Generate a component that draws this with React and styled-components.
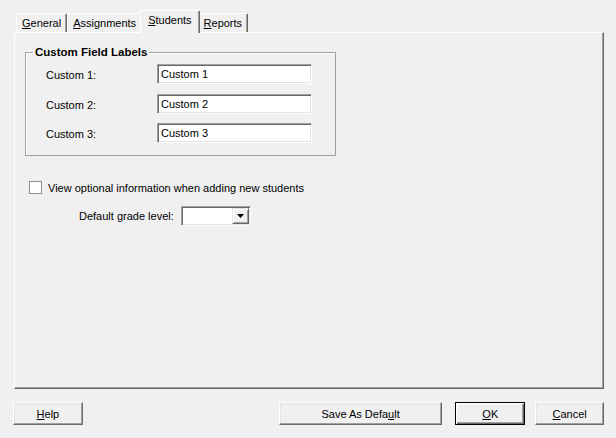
import React from "react";
import styled, { createGlobalStyle } from "styled-components";

const Global = createGlobalStyle`
  html, body { margin: 0; padding: 0; background: #f0f0f0; }
  body { font-family: "Liberation Sans", Arial, sans-serif; font-size: 11px; color: #000; }
  * { box-sizing: border-box; }
`;

const Window = styled.div`
  width: 616px;
  height: 438px;
  padding: 10px 12px 0 14px;
  background: #f0f0f0;
  display: flex;
  flex-direction: column;
`;

const TabRow = styled.div`
  display: flex;
  align-items: flex-end;
  height: 22px;
  padding-left: 2px;
  position: relative;
  z-index: 1;
`;

const Tab = styled.div`
  height: ${(p) => (p.$active ? "23px" : "19px")};
  margin: ${(p) => (p.$active ? "0 -2px -1px -2px" : "0")};
  padding: ${(p) => (p.$active ? "2px 7px 0 7px" : "2px 5px 0 5px")};
  background: #f0f0f0;
  border-left: 1px solid #fff;
  border-top: 1px solid #fff;
  border-right: 1px solid #696969;
  box-shadow: inset -1px 0 #a0a0a0;
  border-radius: 2px 2px 0 0;
  line-height: 14px;
  white-space: nowrap;
  z-index: ${(p) => (p.$active ? 2 : 1)};
`;

const U = styled.span`
  text-decoration: underline;
  text-underline-offset: 1px;
`;

const Panel = styled.div`
  height: 357px;
  border-top: 1px solid #fff;
  border-left: 1px solid #fff;
  border-right: 1px solid #696969;
  border-bottom: 1px solid #696969;
  box-shadow: inset -1px -1px #a0a0a0;
  padding: 13px 10px 0 10px;
  display: flex;
  flex-direction: column;
`;

const Group = styled.fieldset`
  margin: 0;
  width: 311px;
  border: 1px solid #a0a0a0;
  box-shadow: inset 1px 1px #fff;
  padding: 5px 0 12px 20px;
  display: grid;
  grid-template-columns: 111px 155px;
  grid-auto-rows: 20px;
  row-gap: 9.5px;
  align-items: center;
`;

const Legend = styled.legend`
  margin-left: -13px;
  padding: 0 2px;
  font-weight: bold;
  font-size: 11.5px;
  line-height: 13px;
`;

const Label = styled.span`
  line-height: 14px;
  padding-top: 2px;
`;

const Field = styled.div`
  height: 20px;
  background: #fff;
  border-style: solid;
  border-width: 1px;
  border-color: #a0a0a0 #fff #fff #a0a0a0;
  box-shadow: inset 1px 1px #696969, inset -1px -1px #e3e3e3;
  padding: 2px 0 0 3px;
  line-height: 14px;
  display: flex;
`;

const CheckRow = styled.label`
  display: flex;
  align-items: center;
  margin: 25px 0 0 4px;
  gap: 6px;
  height: 13px;
`;

const Box = styled.span`
  width: 13px;
  height: 13px;
  background: #fff;
  border: 1px solid #8f8f8f;
  flex: none;
`;

const GradeRow = styled.div`
  display: flex;
  align-items: center;
  margin: 12px 0 0 54px;
  gap: 7px;
`;

const Select = styled(Field)`
  padding: 0;
  justify-content: flex-end;
  width: 70px;
`;

const DropBtn = styled.span`
  width: 17px;
  height: 16px;
  margin: 1px 1px 0 0;
  background: #f0f0f0;
  border-style: solid;
  border-width: 1px;
  border-color: #e3e3e3 #696969 #696969 #e3e3e3;
  box-shadow: inset 1px 1px #fff, inset -1px -1px #a0a0a0;
  display: flex;
  align-items: center;
  justify-content: center;
`;

const ButtonBar = styled.div`
  display: flex;
  margin: 13px 0 0 -1px;
`;

const Button = styled.div`
  width: ${(p) => p.$w}px;
  height: 23px;
  margin-left: ${(p) => p.$ml || 0}px;
  display: flex;
  align-items: center;
  justify-content: center;
  background: #f0f0f0;
  border-style: solid;
  border-width: 1px;
  border-color: ${(p) => (p.$default ? "#000" : "#fff #696969 #696969 #fff")};
  box-shadow: ${(p) =>
    p.$default
      ? "inset 1px 1px #fff, inset -1px -1px #696969, inset -2px -2px #a0a0a0"
      : "inset -1px -1px #a0a0a0, inset 1px 1px #e3e3e3"};
  line-height: 14px;
  padding-top: 1px;
`;

export default function App() {
  return (
    <>
      <Global />
      <Window>
        <TabRow>
          <Tab><U>G</U>eneral</Tab>
          <Tab><U>A</U>ssignments</Tab>
          <Tab $active><U>S</U>tudents</Tab>
          <Tab><U>R</U>eports</Tab>
        </TabRow>
        <Panel>
          <Group>
            <Legend>Custom Field Labels</Legend>
            <Label>Custom 1:</Label>
            <Field>Custom 1</Field>
            <Label>Custom 2:</Label>
            <Field>Custom 2</Field>
            <Label>Custom 3:</Label>
            <Field>Custom 3</Field>
          </Group>
          <CheckRow>
            <Box />
            <span>View optional information when adding new students</span>
          </CheckRow>
          <GradeRow>
            <span>Default grade level:</span>
            <Select>
              <DropBtn>
                <svg width="7" height="4" viewBox="0 0 7 4">
                  <path d="M0 0h7L3.5 4z" fill="#000" />
                </svg>
              </DropBtn>
            </Select>
          </GradeRow>
        </Panel>
        <ButtonBar>
          <Button $w={70}><U>H</U>elp</Button>
          <Button $w={164} $ml={196}>Save As Defa<U>u</U>lt</Button>
          <Button $w={70} $ml={13} $default><U>O</U>K</Button>
          <Button $w={69} $ml={10}><U>C</U>ancel</Button>
        </ButtonBar>
      </Window>
    </>
  );
}
